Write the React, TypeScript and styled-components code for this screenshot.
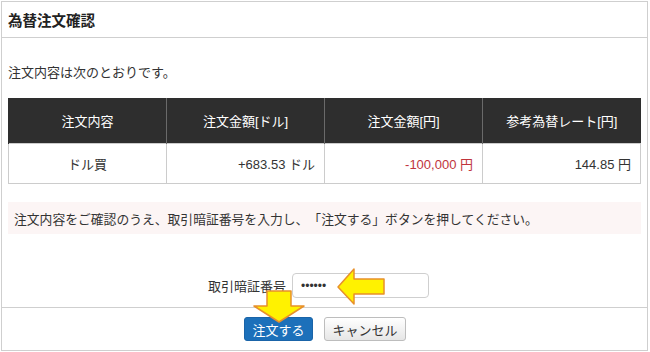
import React from "react";
import styled, { createGlobalStyle } from "styled-components";

const Global = createGlobalStyle`
  html, body { margin: 0; padding: 0; background: #fff; }
  body {
    font-family: "Liberation Sans", Arial, "Noto Sans CJK JP", sans-serif;
    color: #333;
    width: 650px;
    height: 352px;
    overflow: hidden;
    text-spacing-trim: space-all;
  }
`;

const Panel = styled.div`
  position: relative;
  box-sizing: border-box;
  width: 647px;
  height: 350px;
  margin: 1px 0 0 1px;
  border: 1px solid #cfcfcf;
  display: flex;
  flex-direction: column;
`;

const Header = styled.div`
  height: 35px;
  border-bottom: 1px solid #cfcfcf;
  display: flex;
  align-items: center;
  padding-left: 6px;
  font-family: "Noto Sans CJK JP", sans-serif;
  font-weight: 700;
  font-size: 14.5px;
  color: #222;
`;

const Content = styled.div`
  padding: 0 6px 0 6px;
  display: flex;
  flex-direction: column;
`;

const Intro = styled.p`
  margin: 24px 0 0 0;
  line-height: 20px;
  font-family: "Noto Sans CJK JP", sans-serif;
  font-size: 13px;
  color: #333;
`;

const Table = styled.table`
  margin-top: 16px;
  width: 633px;
  border-collapse: collapse;
  table-layout: fixed;
  font-size: 13px;
`;

const Th = styled.th`
  background: #2e2e2e;
  color: #fff;
  height: 45px;
  padding: 0;
  font-weight: 400;
  text-align: center;
  border-left: 1px solid #6a6a6a;
  &:first-child { border-left: 1px solid #2e2e2e; }
`;

const Td = styled.td<{ $align?: string; $red?: boolean }>`
  height: 39px;
  padding: 0 9px;
  border: 1px solid #cccccc;
  text-align: ${(p) => p.$align || "right"};
  color: ${(p) => (p.$red ? "#c0343c" : "#333")};
`;

const Notice = styled.div`
  margin-top: 18px;
  height: 32px;
  width: 633px;
  background: #fcf5f5;
  display: flex;
  align-items: center;
  padding-left: 6px;
  box-sizing: border-box;
  font-family: "Noto Sans CJK JP", sans-serif;
  font-size: 12.8px;
  color: #333;
  text-spacing-trim: space-all;
`;

const PassRow = styled.div`
  margin-top: 39px;
  display: flex;
  justify-content: center;
  align-items: center;
  gap: 6px;
  padding-right: 12px;
  font-family: "Noto Sans CJK JP", sans-serif;
  font-size: 13px;
  color: #333;
`;

const PassInput = styled.input`
  box-sizing: border-box;
  width: 137px;
  height: 25px;
  border: 1px solid #cfcfcf;
  border-radius: 4px;
  padding: 0 8px;
  font-size: 12px;
  letter-spacing: 0px;
  color: #333;
  outline: none;
  font-family: "Liberation Sans", sans-serif;
`;

const Footer = styled.div`
  margin-top: 9px;
  border-top: 1px solid #cfcfcf;
  display: flex;
  justify-content: center;
  gap: 11px;
  padding-top: 9px;
  padding-left: 1px;
`;

const Button = styled.button<{ $primary?: boolean }>`
  box-sizing: border-box;
  height: 24px;
  padding: 0;
  width: ${(p) => (p.$primary ? "69px" : "82px")};
  border-radius: 3px;
  font-family: "Noto Sans CJK JP", sans-serif;
  font-size: 13px;
  cursor: pointer;
  border: 1px solid ${(p) => (p.$primary ? "#1a64a8" : "#bdbdbd")};
  background: ${(p) =>
    p.$primary
      ? "#1c70ba"
      : "linear-gradient(#ffffff, #e6e6e6)"};
  color: ${(p) => (p.$primary ? "#fff" : "#333")};
`;

const ArrowSvg = styled.svg<{ $x: number; $y: number }>`
  position: absolute;
  left: ${(p) => p.$x}px;
  top: ${(p) => p.$y}px;
  overflow: visible;
`;

export default function App() {
  return (
    <>
      <Global />
      <Panel>
        <Header>為替注文確認</Header>
        <Content>
          <Intro>注文内容は次のとおりです。</Intro>
          <Table>
            <thead>
              <tr>
                <Th>注文内容</Th>
                <Th>注文金額[ドル]</Th>
                <Th>注文金額[円]</Th>
                <Th>参考為替レート[円]</Th>
              </tr>
            </thead>
            <tbody>
              <tr>
                <Td $align="center">ドル買</Td>
                <Td>+683.53 ドル</Td>
                <Td $red>-100,000 円</Td>
                <Td>144.85 円</Td>
              </tr>
            </tbody>
          </Table>
          <Notice>
            注文内容をご確認のうえ、取引暗証番号を入力し、「注文する」ボタンを押してください。
          </Notice>
          <PassRow>
            <span>取引暗証番号</span>
            <PassInput type="password" defaultValue="123456" readOnly />
          </PassRow>
        </Content>
        <Footer>
          <Button $primary>注文する</Button>
          <Button>キャンセル</Button>
        </Footer>
        <ArrowSvg $x={334} $y={264} width="52" height="42" viewBox="0 0 52 42">
          <polygon
            points="2,21 18,3 18,13 48,13 48,28 18,28 18,38"
            fill="#fff200"
            stroke="#e8902a"
            strokeWidth="1.5"
            strokeLinejoin="round"
          />
        </ArrowSvg>
        <ArrowSvg $x={250} $y={287} width="56" height="36" viewBox="0 0 56 36">
          <polygon
            points="15,2 39,2 39,17 52,17 27,33 2,17 15,17"
            fill="#fff200"
            stroke="#e8902a"
            strokeWidth="1.5"
            strokeLinejoin="round"
          />
        </ArrowSvg>
      </Panel>
    </>
  );
}
